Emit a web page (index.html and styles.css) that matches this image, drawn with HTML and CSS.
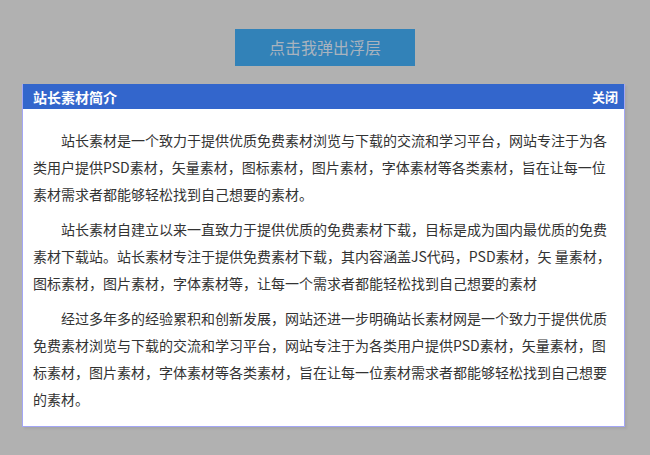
FILE: index.html
```html
<!DOCTYPE html>
<html lang="zh-CN">
<head>
<meta charset="utf-8">
<title>站长素材简介</title>
<link rel="stylesheet" href="styles.css">
</head>
<body>
<div class="page">
  <div class="btn">点击我弹出浮层</div>
  <div class="dialog">
    <div class="dialog-head">
      <span class="title">站长素材简介</span>
      <span class="close">关闭</span>
    </div>
    <div class="dialog-body">
      <p>站长素材是一个致力于提供优质免费素材浏览与下载的交流和学习平台，网站专注于为各<br>类用户提供PSD素材，矢量素材，图标素材，图片素材，字体素材等各类素材，旨在让每一位<br>素材需求者都能够轻松找到自己想要的素材。</p>
      <p>站长素材自建立以来一直致力于提供优质的免费素材下载，目标是成为国内最优质的免费<br>素材下载站。站长素材专注于提供免费素材下载，其内容涵盖JS代码，PSD素材，矢 量素材，<br>图标素材，图片素材，字体素材等，让每一个需求者都能轻松找到自己想要的素材</p>
      <p>经过多年多的经验累积和创新发展，网站还进一步明确站长素材网是一个致力于提供优质<br>免费素材浏览与下载的交流和学习平台，网站专注于为各类用户提供PSD素材，矢量素材，图<br>标素材，图片素材，字体素材等各类素材，旨在让每一位素材需求者都能够轻松找到自己想要<br>的素材。</p>
    </div>
  </div>
</div>
</body>
</html>
```

FILE: styles.css
```css
html, body {
  margin: 0;
  padding: 0;
  background: #b1b1b1;
}
body {
  width: 650px;
  height: 455px;
  overflow: hidden;
  font-family: "Noto Sans CJK SC", "Noto Sans", sans-serif;
}
.page {
  display: flex;
  flex-direction: column;
  padding-top: 29px;
}
.btn {
  align-self: center;
  width: 180px;
  height: 37px;
  line-height: 37px;
  text-align: center;
  background: #3282b8;
  color: #a9b3be;
  font-size: 16px;
}
.dialog {
  margin: 18px 0 0 22px;
  width: 601px;
  border: 1px solid #a3a6f5;
  border-top: 0;
  background: #fff;
  box-shadow: 2px 2px 2px rgba(0,0,0,0.06);
}
.dialog-head {
  display: flex;
  justify-content: space-between;
  align-items: center;
  height: 25px;
  padding: 0 6px 0 10px;
  background: #3366cc;
  color: #fff;
  font-weight: bold;
}
.title {
  font-size: 14px;
}
.close {
  font-size: 13px;
}
.dialog-body {
  padding: 10px 10px 5px 10px;
  color: #333;
  font-size: 14px;
  line-height: 27px;
}
.dialog-body p {
  margin: 8px 0;
  text-indent: 2em;
  white-space: nowrap;
}
```
